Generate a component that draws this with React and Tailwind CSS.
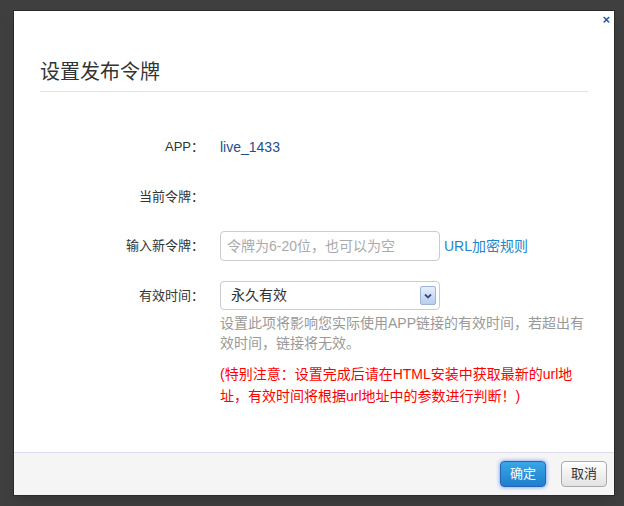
export default function App() {
  const font = { fontFamily: '"Liberation Sans", "Noto Sans CJK SC", sans-serif' };
  return (
    <div className="w-[624px] h-[506px] bg-[#3f3f3f] pt-[10px] pl-[13px] overflow-hidden" style={font}>
      <div className="relative w-[602px] h-[486px] bg-white border border-[#2a2a2a] flex flex-col shadow-lg">
        <button className="absolute right-[4px] top-[2px] text-[#1a5fa8] text-[13px] font-bold leading-none">×</button>
        <div className="px-[26px] pt-[47px]">
          <h2 className="text-[20px] text-[#333] leading-[28px] pb-[5px] border-b border-[#e3e3e3]">设置发布令牌</h2>
        </div>
        <div className="flex-1 pt-[40px] text-[13px]">
          <div className="flex items-center h-[30px]">
            <div className="w-[190px] text-right text-[#333]">APP：</div>
            <div className="ml-[16px] text-[#1d4f8c] text-[14px]">live_1433</div>
          </div>
          <div className="flex items-center h-[30px] mt-[20px]">
            <div className="w-[190px] text-right text-[#333]">当前令牌：</div>
          </div>
          <div className="flex items-center h-[30px] mt-[19px]">
            <div className="w-[190px] text-right text-[#333]">输入新令牌：</div>
            <input
              className="ml-[16px] w-[220px] h-[30px] border border-[#ccc] rounded-[4px] px-[6px] text-[14px] placeholder-[#aaa]"
              placeholder="令牌为6-20位，也可以为空"
            />
            <a className="ml-[4px] text-[#1f86c9] text-[14px]">URL加密规则</a>
          </div>
          <div className="flex items-start mt-[20px]">
            <div className="w-[190px] text-right text-[#333] leading-[30px]">有效时间：</div>
            <div className="ml-[16px] w-[372px]">
              <div className="w-[220px] h-[29px] border border-[#ccc] rounded-[4px] flex items-center justify-between pl-[10px] pr-[3px] text-[#333] text-[14px]">
                <span>永久有效</span>
                <span className="w-[16px] h-[19px] rounded-[2px] border border-[#9fb3d6] bg-gradient-to-b from-[#e6eefb] to-[#b9cdef] flex items-center justify-center">
                  <svg width="8" height="6" viewBox="0 0 8 6"><path d="M1 1.5 L4 4.5 L7 1.5" stroke="#3b4f7a" strokeWidth="1.8" fill="none" /></svg>
                </span>
              </div>
              <p className="text-[#999] text-[14px] leading-[20px] mt-[3px]">设置此项将影响您实际使用APP链接的有效时间，若超出有效时间，链接将无效。</p>
              <p className="text-[#f00] text-[14px] leading-[22px] mt-[10px]">(特别注意：设置完成后请在HTML安装中获取最新的url地址，有效时间将根据url地址中的参数进行判断！)</p>
            </div>
          </div>
        </div>
        <div className="h-[43px] bg-[#f5f5f5] border-t border-[#dde] flex items-center justify-end gap-[15px] pr-[7px]">
          <button className="w-[46px] h-[26px] rounded-[4px] bg-gradient-to-b from-[#3aa6e6] to-[#1f7fcc] border border-[#2465b8] text-white text-[13px] shadow-[0_0_4px_#6c8cf0]">确定</button>
          <button className="w-[46px] h-[26px] rounded-[4px] bg-gradient-to-b from-white to-[#e2e2e2] border border-[#aaa] text-[#333] text-[13px]">取消</button>
        </div>
      </div>
    </div>
  );
}
